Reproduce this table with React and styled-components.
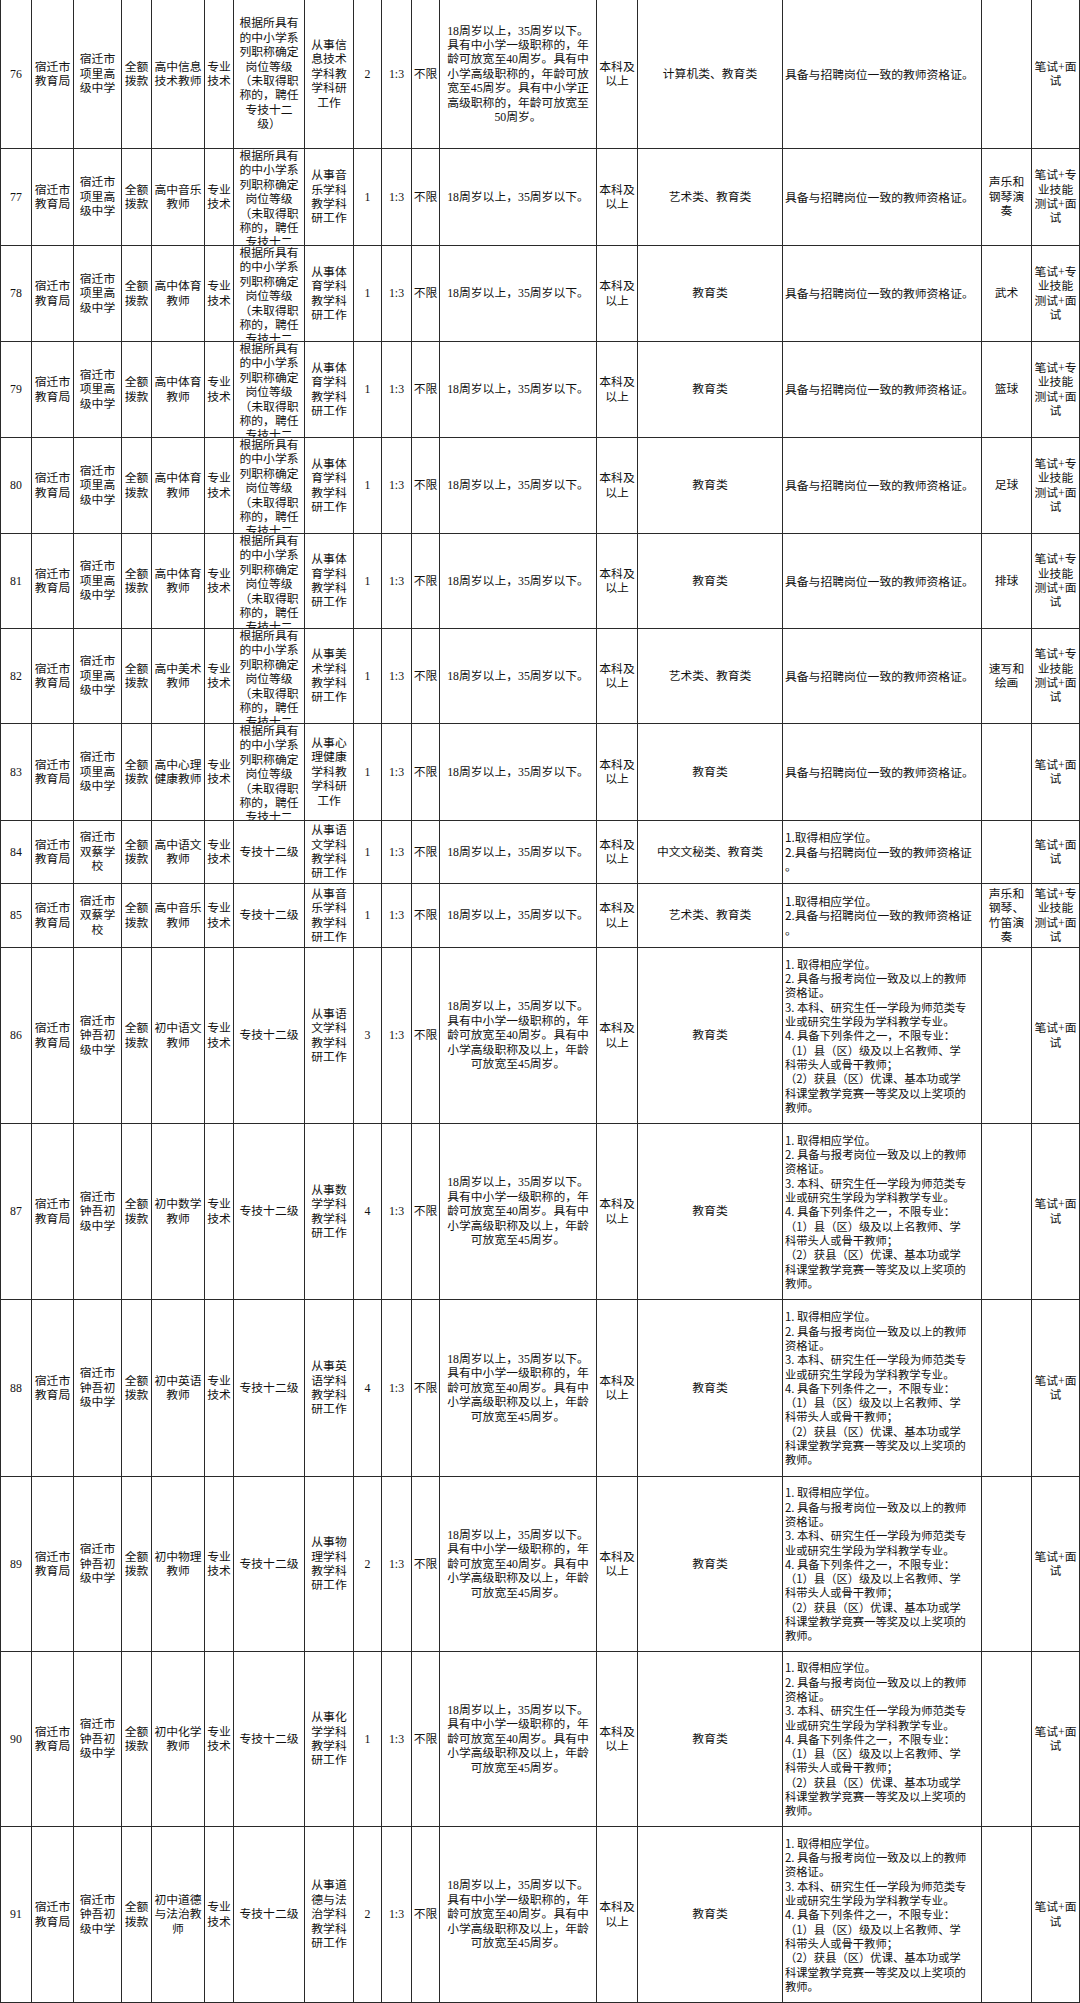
import styled, { createGlobalStyle } from 'styled-components'

const GlobalStyle = createGlobalStyle`
  html, body {
    margin: 0;
    padding: 0;
    background: #ffffff;
  }
  body {
    font-family: "Liberation Serif", "Noto Sans CJK SC", serif;
    color: #111111;
  }
`

const COLS = [
  { key: 'no', w: 31 },
  { key: 'dept', w: 42 },
  { key: 'unit', w: 48 },
  { key: 'fund', w: 30 },
  { key: 'post', w: 53 },
  { key: 'kind', w: 29 },
  { key: 'grade', w: 71 },
  { key: 'desc', w: 49 },
  { key: 'count', w: 28 },
  { key: 'ratio', w: 30 },
  { key: 'sex', w: 28 },
  { key: 'age', w: 157 },
  { key: 'edu', w: 41 },
  { key: 'major', w: 145 },
  { key: 'other', w: 199, align: 'left', sans: true },
  { key: 'skill', w: 50 },
  { key: 'exam', w: 48 },
]

const UNIT_XL = ['宿迁市', '项里高', '级中学']
const UNIT_SC = ['宿迁市', '双蔡学', '校']
const UNIT_ZW = ['宿迁市', '钟吾初', '级中学']

const GRADE_LONG = ['根据所具有', '的中小学系', '列职称确定', '岗位等级', '（未取得职', '称的，聘任', '专技十二', '级）']
const GRADE_SHORT = ['专技十二级']

const AGE_SHORT = ['18周岁以上，35周岁以下。']
const AGE_76 = [
  '18周岁以上，35周岁以下。',
  '具有中小学一级职称的，年',
  '龄可放宽至40周岁。具有中',
  '小学高级职称的，年龄可放',
  '宽至45周岁。具有中小学正',
  '高级职称的，年龄可放宽至',
  '50周岁。',
]
const AGE_JR = [
  '18周岁以上，35周岁以下。',
  '具有中小学一级职称的，年',
  '龄可放宽至40周岁。具有中',
  '小学高级职称及以上，年龄',
  '可放宽至45周岁。',
]

const OTHER_A = ['具备与招聘岗位一致的教师资格证。']
const OTHER_B = ['1.取得相应学位。', '2.具备与招聘岗位一致的教师资格证', '。']
const OTHER_C = [
  '1. 取得相应学位。',
  '2. 具备与报考岗位一致及以上的教师',
  '资格证。',
  '3. 本科、研究生任一学段为师范类专',
  '业或研究生学段为学科教学专业。',
  '4. 具备下列条件之一，不限专业：',
  '（1）县（区）级及以上名教师、学',
  '科带头人或骨干教师；',
  '（2）获县（区）优课、基本功或学',
  '科课堂教学竞赛一等奖及以上奖项的',
  '教师。',
]

const EXAM_A = ['笔试+面', '试']
const EXAM_B = ['笔试+专', '业技能', '测试+面', '试']

const DESC_PE = ['从事体', '育学科', '教学科', '研工作']

const base = {
  dept: ['宿迁市', '教育局'],
  fund: ['全额', '拨款'],
  kind: ['专业', '技术'],
  ratio: ['1:3'],
  sex: ['不限'],
  edu: ['本科及', '以上'],
  skill: [],
}

const senior = { ...base, unit: UNIT_XL, grade: GRADE_LONG, age: AGE_SHORT, other: OTHER_A, exam: EXAM_B }
const junior = { ...base, unit: UNIT_ZW, grade: GRADE_SHORT, age: AGE_JR, major: ['教育类'], other: OTHER_C, exam: EXAM_A, small: true }

const rows = [
  { ...senior, no: 76, h: 149, post: ['高中信息', '技术教师'], desc: ['从事信', '息技术', '学科教', '学科研', '工作'], count: 2, age: AGE_76, major: ['计算机类、教育类'], exam: EXAM_A },
  { ...senior, no: 77, h: 97, post: ['高中音乐', '教师'], desc: ['从事音', '乐学科', '教学科', '研工作'], count: 1, major: ['艺术类、教育类'], skill: ['声乐和', '钢琴演', '奏'] },
  { ...senior, no: 78, h: 96, post: ['高中体育', '教师'], desc: DESC_PE, count: 1, major: ['教育类'], skill: ['武术'] },
  { ...senior, no: 79, h: 96, post: ['高中体育', '教师'], desc: DESC_PE, count: 1, major: ['教育类'], skill: ['篮球'] },
  { ...senior, no: 80, h: 96, post: ['高中体育', '教师'], desc: DESC_PE, count: 1, major: ['教育类'], skill: ['足球'] },
  { ...senior, no: 81, h: 95, post: ['高中体育', '教师'], desc: DESC_PE, count: 1, major: ['教育类'], skill: ['排球'] },
  { ...senior, no: 82, h: 95, post: ['高中美术', '教师'], desc: ['从事美', '术学科', '教学科', '研工作'], count: 1, major: ['艺术类、教育类'], skill: ['速写和', '绘画'] },
  { ...senior, no: 83, h: 97, post: ['高中心理', '健康教师'], desc: ['从事心', '理健康', '学科教', '学科研', '工作'], count: 1, major: ['教育类'], exam: EXAM_A },
  { ...base, no: 84, h: 63, unit: UNIT_SC, post: ['高中语文', '教师'], grade: GRADE_SHORT, desc: ['从事语', '文学科', '教学科', '研工作'], count: 1, age: AGE_SHORT, major: ['中文文秘类、教育类'], other: OTHER_B, exam: EXAM_A },
  { ...base, no: 85, h: 64, unit: UNIT_SC, post: ['高中音乐', '教师'], grade: GRADE_SHORT, desc: ['从事音', '乐学科', '教学科', '研工作'], count: 1, age: AGE_SHORT, major: ['艺术类、教育类'], other: OTHER_B, skill: ['声乐和', '钢琴、', '竹笛演', '奏'], exam: EXAM_B },
  { ...junior, no: 86, h: 176, post: ['初中语文', '教师'], desc: ['从事语', '文学科', '教学科', '研工作'], count: 3 },
  { ...junior, no: 87, h: 176, post: ['初中数学', '教师'], desc: ['从事数', '学学科', '教学科', '研工作'], count: 4 },
  { ...junior, no: 88, h: 177, post: ['初中英语', '教师'], desc: ['从事英', '语学科', '教学科', '研工作'], count: 4 },
  { ...junior, no: 89, h: 175, post: ['初中物理', '教师'], desc: ['从事物', '理学科', '教学科', '研工作'], count: 2 },
  { ...junior, no: 90, h: 175, post: ['初中化学', '教师'], desc: ['从事化', '学学科', '教学科', '研工作'], count: 1 },
  { ...junior, no: 91, h: 176, post: ['初中道德', '与法治教', '师'], desc: ['从事道', '德与法', '治学科', '教学科', '研工作'], count: 2 },
]

const toLines = (v) => (Array.isArray(v) ? v : [String(v)])

const App = () => {
  return (
    <>
      <GlobalStyle />
      <Sheet>
        {rows.map((row) => (
          <Row key={row.no} $h={row.h}>
            {COLS.map((col) => (
              <Cell
                key={col.key}
                $align={col.align || 'center'}
                $sans={col.sans}
                $small={col.key === 'other' && row.small}
              >
                <Content>
                  {toLines(row[col.key]).map((line, i) => (
                    <Line key={i}>{line}</Line>
                  ))}
                </Content>
              </Cell>
            ))}
          </Row>
        ))}
      </Sheet>
    </>
  )
}

export default App

const Sheet = styled.div`
  width: 1080px;
  box-sizing: border-box;
  border-left: 1px solid #2a2a2a;
  display: flex;
  flex-direction: column;
`

const Row = styled.div`
  display: grid;
  grid-template-columns: ${COLS.map((c) => `${c.w}px`).join(' ')};
  height: ${(p) => p.$h}px;
`

// overflowing text sticks to the top and is cut at the bottom, as in the sheet
const Cell = styled.div`
  box-sizing: border-box;
  border-right: 1px solid #2a2a2a;
  border-bottom: 1px solid #2a2a2a;
  overflow: hidden;
  display: flex;
  flex-direction: column;
  padding-left: ${(p) => (p.$align === 'left' ? '2px' : '0')};
  text-align: ${(p) => p.$align};
  font-family: ${(p) =>
    p.$sans ? '"Noto Sans CJK SC", sans-serif' : '"Liberation Serif", "Noto Sans CJK SC", serif'};
  font-size: ${(p) => (p.$small ? '11.3px' : '11.8px')};
  line-height: ${(p) => (p.$small ? '14.3px' : '14.4px')};
  color: #111111;
`

const Content = styled.div`
  margin: auto 0;
`

const Line = styled.div`
  white-space: nowrap;
`
